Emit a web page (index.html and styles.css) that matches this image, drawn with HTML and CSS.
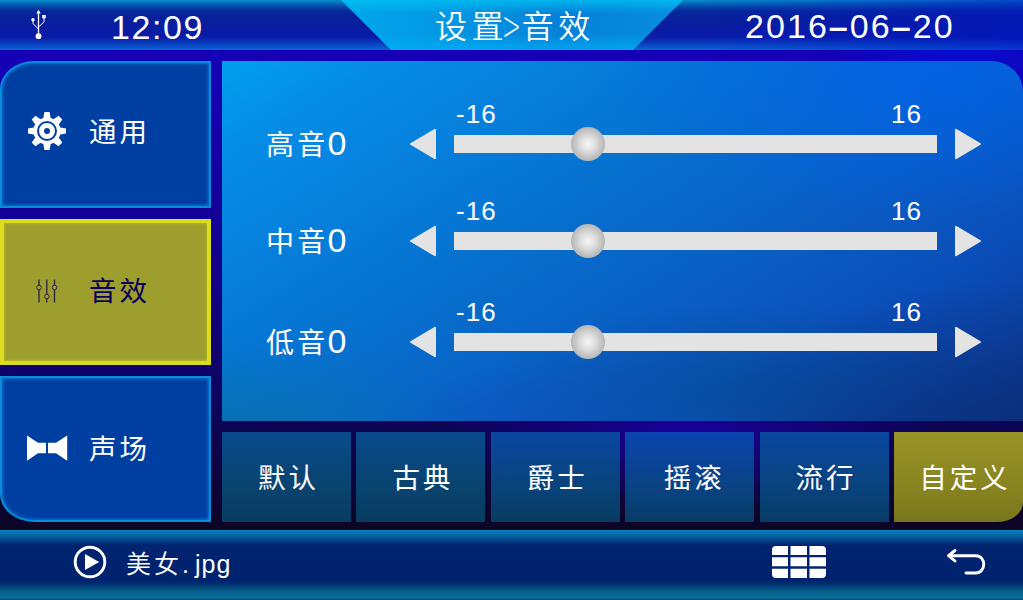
FILE: index.html
```html
<!DOCTYPE html>
<html lang="zh-CN">
<head>
<meta charset="utf-8">
<title>设置 音效</title>
<link rel="stylesheet" href="styles.css">
</head>
<body>
<div class="screen">
  <header class="topbar">
    <div class="status">
      <svg class="usb" width="16" height="32" viewBox="0 0 16 32" fill="none" stroke="#fff">
        <path d="M7.5 4V26" stroke-width="1.3"/>
        <path d="M2 11V14.5L7.5 20M13 8V13L7.5 18" stroke-width="1"/>
        <path d="M5.3 4.5L7.5 .8L9.7 4.5Z" fill="#fff" stroke="none"/>
        <circle cx="2" cy="10.7" r="1.7" fill="#fff" stroke="none"/>
        <rect x="11.2" y="6" width="3.5" height="3.3" fill="#fff" stroke="none"/>
        <circle cx="7.5" cy="27.2" r="2.9" fill="#fff" stroke="none"/>
      </svg>
      <span class="time">12:09</span>
    </div>
    <h1 class="title"><span>设</span><span class="tight">置</span><span class="crumb">&gt;</span><span>音效</span></h1>
    <div class="date">2016<b>–</b>06<b>–</b>20</div>
  </header>

  <main class="main">
    <nav class="side">
      <div class="card first">
        <svg class="icon" width="42" height="42" viewBox="-21 -21 42 42">
          <g fill="#fff">
            <circle r="13.6"/>
            <path id="tooth" d="M-3.8 -12L-2.6 -19H2.6L3.8 -12V12L2.6 19H-2.6L-3.8 12Z"/>
            <use href="#tooth" transform="rotate(45)"/>
            <use href="#tooth" transform="rotate(90)"/>
            <use href="#tooth" transform="rotate(135)"/>
          </g>
          <circle r="9" fill="#fff" stroke="#003fa2" stroke-width="2"/>
          <circle r="3" fill="#003fa2"/>
        </svg>
        <span>通用</span>
      </div>
      <div class="card active">
        <svg class="icon" width="42" height="42" viewBox="0 0 42 42" fill="#9d9e2e" stroke="#30294b">
          <path d="M13 9.5V32.5M20.8 9.5V32.5M28.5 9.5V32.5" stroke-width="1.4"/>
          <g stroke-width="1"><circle cx="13" cy="17.5" r="2.3"/><circle cx="20.8" cy="26.5" r="2.3"/><circle cx="28.5" cy="17.5" r="2.3"/></g>
        </svg>
        <span>音效</span>
      </div>
      <div class="card last">
        <svg class="icon" width="42" height="42" viewBox="0 0 42 42" fill="#fff">
          <path d="M1 8.5L12 15.8H20V26.3H12L1 33.8ZM41.2 8.5L30 15.8H22V26.3H30L41.2 33.8Z"/>
        </svg>
        <span>声场</span>
      </div>
    </nav>

    <section class="content">
      <div class="panel">
        <div class="row">
          <div class="label">高音<i>0</i></div>
          <svg class="arrow" width="28" height="32" viewBox="0 0 28 32"><path d="M2 16L26 1.8V30.2Z"/></svg>
          <div class="slider"><div class="range"><span>-16</span><span>16</span></div><div class="track"><div class="knob"></div></div></div>
          <svg class="arrow" width="28" height="32" viewBox="0 0 28 32"><path d="M26 16L2 1.8V30.2Z"/></svg>
        </div>
        <div class="row mid">
          <div class="label">中音<i>0</i></div>
          <svg class="arrow" width="28" height="32" viewBox="0 0 28 32"><path d="M2 16L26 1.8V30.2Z"/></svg>
          <div class="slider"><div class="range"><span>-16</span><span>16</span></div><div class="track"><div class="knob"></div></div></div>
          <svg class="arrow" width="28" height="32" viewBox="0 0 28 32"><path d="M26 16L2 1.8V30.2Z"/></svg>
        </div>
        <div class="row low">
          <div class="label">低音<i>0</i></div>
          <svg class="arrow" width="28" height="32" viewBox="0 0 28 32"><path d="M2 16L26 1.8V30.2Z"/></svg>
          <div class="slider"><div class="range"><span>-16</span><span>16</span></div><div class="track"><div class="knob"></div></div></div>
          <svg class="arrow" width="28" height="32" viewBox="0 0 28 32"><path d="M26 16L2 1.8V30.2Z"/></svg>
        </div>
      </div>
      <div class="tabs">
        <div class="tab">默认</div>
        <div class="tab">古典</div>
        <div class="tab">爵士</div>
        <div class="tab wide">摇滚</div>
        <div class="tab">流行</div>
        <div class="tab custom">自定义</div>
      </div>
    </section>
  </main>

  <footer class="bottombar">
    <svg class="play" width="34" height="34" viewBox="0 0 34 34">
      <circle cx="17" cy="17" r="14.8" fill="none" stroke="#fff" stroke-width="2.9"/>
      <path d="M12 9L26.2 17L12 25Z" fill="#fff"/>
    </svg>
    <div class="file">美女<span>.</span><span class="ext">jpg</span></div>
    <svg class="grid" width="54" height="32" viewBox="0 0 54 32" fill="#fff">
      <path d="M4 0H16V9H0V4Q0 0 4 0ZM18.5 0H35V9H18.5ZM37.5 0H50Q54 0 54 4V9H37.5ZM0 11.3H16V20.2H0ZM18.5 11.3H35V20.2H18.5ZM37.5 11.3H54V20.2H37.5ZM0 22.8H16V32H4Q0 32 0 28ZM18.5 22.8H35V32H18.5ZM37.5 22.8H54V28Q54 32 50 32H37.5Z"/>
    </svg>
    <svg class="back" width="40" height="28" viewBox="0 0 40 28" fill="none" stroke="#fff" stroke-width="2.9" stroke-linecap="round" stroke-linejoin="round">
      <path d="M9 2.5L2.5 7.7L9 13M3 7.7H29.5C40.5 7.7 40.5 25 29.5 25H20"/>
    </svg>
  </footer>
</div>
</body>
</html>
```
FILE: styles.css
```css
* { box-sizing: border-box; }
body {
  margin: 0;
  overflow: hidden;
  color: #fff;
  font-family: "Liberation Sans", "Noto Sans CJK SC", sans-serif;
}
.screen {
  width: 1023px;
  height: 600px;
  display: flex;
  flex-direction: column;
  background:
    radial-gradient(ellipse 140px 90px at 960px 20px, #0012dc, rgba(0, 18, 220, 0)),
    radial-gradient(ellipse 250px 85px at 690px 425px, #19009a, rgba(25, 0, 154, 0)),
    linear-gradient(#1500b9 0, #1500b4 75px, #13008e 260px, #0d0456 420px, #0c0527 525px, #0c0620);
}
.topbar {
  height: 50px;
  flex: none;
  display: grid;
  grid-template-columns: 341px 342px 340px;
  grid-template-rows: 50px;
  background:
    linear-gradient(90deg, transparent 68%, rgba(0, 20, 200, .55) 100%),
    linear-gradient(#078fca 0, #0757b0 5px, #06289b 11px, #07209a 18px, #0a1ba8 37px, #083cbc 43px, #0b65d4 50px);
}
.status { display: flex; align-items: center; }
.usb { margin-left: 31px; margin-top: -1px; }
.time { margin-left: 64px; margin-top: 4px; font-size: 34px; line-height: 40px; letter-spacing: 1.6px; }
.title {
  height: 50px;
  margin: 0;
  padding: 5px 0 0 94px;
  display: flex;
  align-items: center;
  font-weight: 350;
  font-size: 32px;
  line-height: 45px;
  letter-spacing: 4.6px;
  clip-path: polygon(0 0, 100% 0, 292px 100%, 50px 100%);
  background:
    linear-gradient(rgba(0, 190, 240, .85) 0, rgba(0, 170, 235, 0) 13px, transparent 34px, rgba(0, 175, 245, .75) 50px),
    linear-gradient(105deg, #00a9ed, #058fdf 45%, #0580d8 65%, #0790e2);
}
.tight { letter-spacing: 0; }
.crumb {
  width: 18px;
  margin-top: -9px;
  font-size: 29px;
  font-weight: 100;
  line-height: 22px;
  letter-spacing: 0;
  font-family: "Noto Sans CJK SC", sans-serif;
  transform: scale(1.08, 1.75);
}
.date { padding: 1px 0 0 62px; font-size: 34px; line-height: 50px; letter-spacing: 2.05px; white-space: nowrap; }
.main {
  height: 480px;
  flex: none;
  display: flex;
  gap: 11px;
  padding: 11px 0 8px;
}
.side {
  width: 211px;
  flex: none;
  display: grid;
  grid-template-rows: 147px 146px 146px;
  row-gap: 11px;
}
.card {
  display: flex;
  align-items: center;
  padding: 0 0 7px 26px;
  font-size: 27.5px;
  font-weight: 400;
  letter-spacing: 3px;
  background: #003fa2;
  border: 2px solid #078bdd;
  box-shadow: inset 0 0 3px 1px #0878d0;
}
.card span { margin-left: 21px; margin-top: -2px; }
.card .icon { margin-left: -2px; }
.first { border-top-left-radius: 34px 28px; }
.last { border-bottom-left-radius: 34px 28px; padding-bottom: 3px; }
.active {
  color: #080057;
  background: #9d9e2e;
  border: 4px solid #dbdc1d;
  box-shadow: inset 0 0 2px 1px #b3b325;
  padding: 0 0 3px 24px;
}
.card.active span { margin-top: -3px; }
.content { width: 801px; display: flex; flex-direction: column; gap: 11px; }
.panel {
  height: 360px;
  padding-top: 34px;
  border-top-right-radius: 32px 30px;
  background:
    radial-gradient(ellipse 330px 150px at 88% 3%, rgba(0, 96, 235, .75), rgba(0, 92, 235, 0)),
    radial-gradient(ellipse 320px 170px at 100% 108%, rgba(11, 42, 112, .75), rgba(10, 50, 125, 0)),
    radial-gradient(ellipse 260px 90px at 66% 92%, rgba(6, 76, 148, .7), rgba(6, 80, 155, 0)),
    radial-gradient(ellipse 240px 80px at 48% 104%, rgba(14, 82, 190, .8), rgba(12, 78, 190, 0)),
    radial-gradient(ellipse 260px 90px at 0 104%, rgba(7, 113, 172, .9), rgba(7, 113, 180, 0)),
    linear-gradient(148deg, #009eee 0, #068be5 13%, #067bd8 30%, #076ccb 46%, #0a5dc4 62%, #0a4db8 78%, #0b3fa0 92%, #0b3888);
}
.row { height: 98px; display: flex; align-items: center; }
.mid { margin-top: -1px; }
.low { margin-top: 3px; }
.label {
  width: 187px;
  padding-left: 44px;
  flex: none;
  font-size: 28px;
  font-weight: 400;
  letter-spacing: 3.2px;
  line-height: 40px;
}
.label i { font-style: normal; font-weight: 400; font-size: 34px; letter-spacing: 0; margin-left: -1px; }
.arrow { flex: none; fill: #e3e3e3; stroke: #e3e3e3; stroke-width: 2; stroke-linejoin: round; }
.slider { width: 483px; margin: 0 17px; height: 98px; padding-top: 4px; }
.range {
  display: flex;
  justify-content: space-between;
  padding: 0 15px 0 2px;
  font-size: 26px;
  line-height: 30px;
  letter-spacing: 1.1px;
}
.track { height: 18px; margin-top: 6px; padding-left: 117px; display: flex; align-items: center; background: #e3e3e3; }
.knob { width: 34px; height: 34px; flex: none; border-radius: 50%; background: radial-gradient(closest-side, #f7f7f7 0, #dadada 50%, #b5b5b5 100%); }
.tabs { height: 90px; display: grid; grid-template-columns: repeat(6, 129px); column-gap: 5.4px; }
.tab {
  display: flex;
  align-items: center;
  justify-content: center;
  padding: 0 0 2px 4px;
  font-size: 27.5px;
  font-weight: 400;
  letter-spacing: 3px;
  background: linear-gradient(#0a4a8d, #09436f 60%, #083c62);
}
.tab:nth-child(3) { background: linear-gradient(#0a47a2, #09437b 60%, #083c62); }
.tab:nth-child(4) { background: linear-gradient(#0a44b0, #094384 60%, #083c66); }
.tab:nth-child(5) { background: linear-gradient(#0a47a0, #09437e 60%, #083c68); }
.tab.wide { padding-left: 9px; }
.tab.custom { padding-left: 13px; background: linear-gradient(#999429, #85811f 70%, #79751d); border-bottom-right-radius: 26px 20px; }
.bottombar {
  height: 70px;
  flex: none;
  display: flex;
  align-items: center;
  padding: 0 37px 6px 73px;
  background: linear-gradient(#0683b8 0, #0568a7 5px, #033f87 11px, #02246f 15px, #01236f 50px, #022a70 53px, #045784 60px, #07749c 68px, #045078 69px, #045078);
}
.file { margin: 0 0 0 19px; font-size: 25px; font-weight: 350; letter-spacing: 3px; white-space: nowrap; }
.ext { margin-left: 3px; letter-spacing: 1px; font-weight: 400; }
.grid { margin-left: auto; }
.back { margin-left: 120px; }
```
